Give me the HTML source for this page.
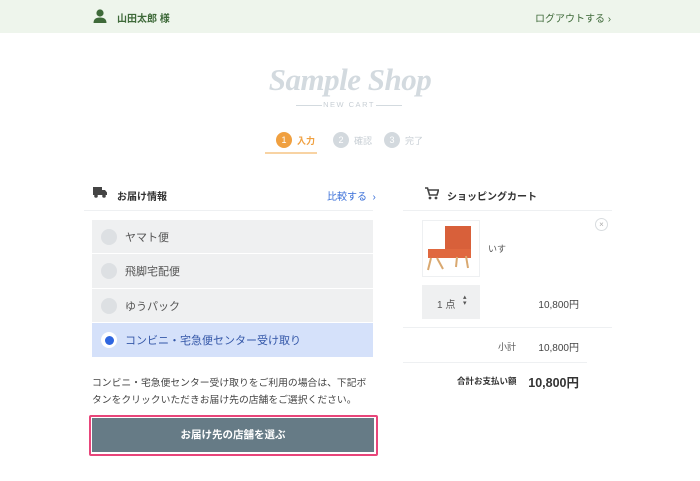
<!DOCTYPE html>
<html><head><meta charset="utf-8"><style>
*{margin:0;padding:0;box-sizing:border-box}
body{width:700px;height:481px;background:#fff;position:relative;overflow:hidden;font-family:"Liberation Sans","Noto Sans CJK JP",sans-serif;color:#444}
.a{position:absolute;white-space:nowrap}
.opt{position:absolute;left:92px;width:281px;background:#eff0f1}
.opt .r{position:absolute;left:9px;top:50%;margin-top:-8px;width:16px;height:16px;border-radius:50%;background:#dde0e3}
.opt span{position:absolute;left:33px;top:50%;transform:translateY(-50%);font-size:11px;color:#555}
.circ{position:absolute;width:16px;height:16px;border-radius:50%;color:#fff;font-size:9px;text-align:center;line-height:16px;top:132px}
</style></head><body>
<div class="a" style="left:0;top:0;width:700px;height:33px;background:#eef5ec"></div>
<svg class="a" style="left:93px;top:9px" width="14" height="14" viewBox="0 0 14 14"><circle cx="7" cy="4" r="3.6" fill="#3f6a3a"/><path d="M0.5 14 Q0.5 8.5 7 8.5 Q13.5 8.5 13.5 14Z" fill="#3f6a3a"/></svg>
<div class="a" style="left:117px;top:10px;font-size:10px;font-weight:bold;color:#3f6a3a">山田太郎 様</div>
<div class="a" style="left:535px;top:10px;font-size:10px;color:#3f6a3a">ログアウトする ›</div>

<div class="a" style="left:260px;top:62px;width:180px;text-align:center;font-family:'Liberation Serif',serif;font-style:italic;font-weight:bold;font-size:31px;color:#d3dadf;letter-spacing:-0.5px">Sample Shop</div>
<div class="a" style="left:296px;top:105px;width:26px;height:1px;background:#d3dadf"></div>
<div class="a" style="left:322px;top:100px;width:54px;text-align:center;font-size:7.5px;letter-spacing:1.5px;color:#c8cfd5">NEW CART</div>
<div class="a" style="left:376px;top:105px;width:26px;height:1px;background:#d3dadf"></div>

<div class="circ" style="left:276px;background:#f0a040">1</div>
<div class="a" style="left:297px;top:134px;font-size:9px;font-weight:bold;color:#f0a040">入力</div>
<div class="a" style="left:265px;top:152px;width:52px;height:2px;background:#f8d3a3"></div>
<div class="circ" style="left:333px;background:#d3d9de">2</div>
<div class="a" style="left:354px;top:134px;font-size:9px;color:#c8cfd5">確認</div>
<div class="circ" style="left:384px;background:#d3d9de">3</div>
<div class="a" style="left:405px;top:134px;font-size:9px;color:#c8cfd5">完了</div>

<svg class="a" style="left:93px;top:187px" width="14" height="11" viewBox="0 0 14 11"><path d="M0 0H9V8H0Z M9 3H12L14 5.5V8H9Z" fill="#444"/><circle cx="3" cy="9" r="1.8" fill="#444"/><circle cx="11" cy="9" r="1.8" fill="#444"/></svg>
<div class="a" style="left:117px;top:188px;font-size:10px;font-weight:bold;color:#333">お届け情報</div>
<div class="a" style="left:327px;top:188px;font-size:10px;color:#3a6fd8">比較する &nbsp;›</div>
<div class="a" style="left:84px;top:210px;width:289px;height:1px;background:#eef0f2"></div>
<div class="opt" style="top:220px;height:33px"><div class="r"></div><span>ヤマト便</span></div>
<div class="opt" style="top:254px;height:34px"><div class="r"></div><span>飛脚宅配便</span></div>
<div class="opt" style="top:289px;height:33px"><div class="r"></div><span>ゆうパック</span></div>
<div class="opt" style="top:323px;height:34px;background:#d5e1fa"><div class="r" style="background:#fff"><div style="position:absolute;left:3.5px;top:3.5px;width:9px;height:9px;border-radius:50%;background:#2f66e0"></div></div><span style="color:#3457a8">コンビニ・宅急便センター受け取り</span></div>
<div class="a" style="left:92px;top:375px;font-size:9.8px;line-height:17px;color:#444;white-space:normal;width:300px">コンビニ・宅急便センター受け取りをご利用の場合は、下記ボ<br>タンをクリックいただきお届け先の店舗をご選択ください。</div>
<div class="a" style="left:89px;top:415px;width:289px;height:41px;border:2px solid #e8457a;border-radius:2px"></div>
<div class="a" style="left:92px;top:418px;width:282px;height:34px;background:#667b86;color:#fff;font-size:10.5px;font-weight:bold;text-align:center;line-height:34px">お届け先の店舗を選ぶ</div>

<svg class="a" style="left:425px;top:187px" width="14" height="13" viewBox="0 0 14 13"><path d="M0 1H2.5L4.5 8H12L13.5 3H3.5" fill="none" stroke="#444" stroke-width="1.6"/><circle cx="5" cy="11" r="1.4" fill="#444"/><circle cx="11" cy="11" r="1.4" fill="#444"/></svg>
<div class="a" style="left:447px;top:188px;font-size:10px;font-weight:bold;color:#333">ショッピングカート</div>
<div class="a" style="left:403px;top:210px;width:209px;height:1px;background:#eef0f2"></div>
<div class="a" style="left:422px;top:220px;width:58px;height:57px;border:1px solid #eef0f2"></div>
<svg class="a" style="left:423px;top:223px" width="56" height="52" viewBox="0 0 56 52"><path d="M22 3H48V26H22Z" fill="#d8603a"/><path d="M5 26H48V35H5Z" fill="#e0683f"/><path d="M8 35L5 47M14 35L20 46M43 33L45 45M34 34L33 44" stroke="#d9a870" stroke-width="2"/></svg>
<div class="a" style="left:488px;top:242px;font-size:9px;color:#555">いす</div>
<div class="a" style="left:595px;top:218px;width:13px;height:13px;border-radius:50%;border:1px solid #d8dcdf;font-size:8px;line-height:11px;text-align:center;color:#aaa">×</div>
<div class="a" style="left:422px;top:285px;width:58px;height:34px;background:#eff0f1"></div>
<div class="a" style="left:437px;top:296px;font-size:10px;color:#555">1 点</div>
<div class="a" style="left:463px;top:295px;font-size:7px;line-height:6px;color:#555">▴<br>▾</div>
<div class="a" style="left:530px;top:296px;width:49px;text-align:right;font-size:10px;color:#444">10,800円</div>
<div class="a" style="left:403px;top:327px;width:209px;height:1px;background:#eef0f2"></div>
<div class="a" style="left:498px;top:340px;font-size:9px;color:#555">小計</div>
<div class="a" style="left:530px;top:339px;width:49px;text-align:right;font-size:10px;color:#444">10,800円</div>
<div class="a" style="left:403px;top:362px;width:184px;height:1px;background:#eef0f2"></div>
<div class="a" style="left:457px;top:375px;font-size:8.5px;font-weight:bold;color:#333">合計お支払い額</div>
<div class="a" style="left:510px;top:372px;width:69px;text-align:right;font-size:12.5px;font-weight:bold;color:#333">10,800円</div>
</body></html>
